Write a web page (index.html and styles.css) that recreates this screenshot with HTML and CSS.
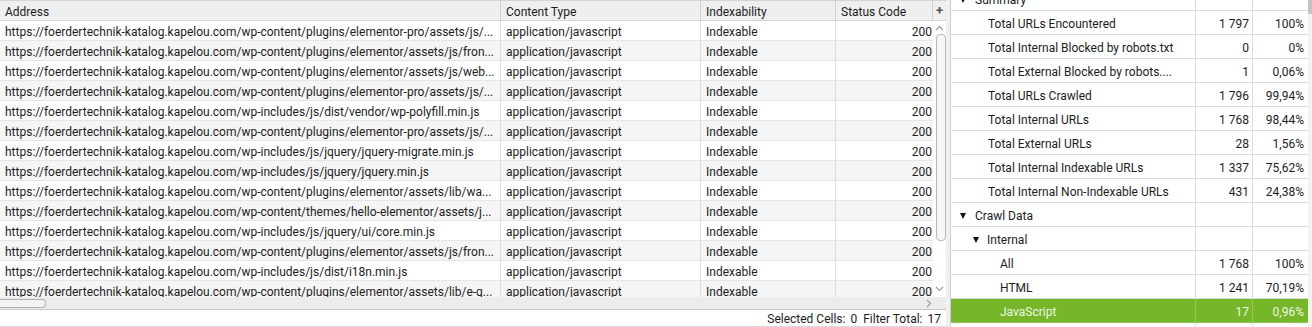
FILE: index.html
```html
<!DOCTYPE html>
<html lang="en">
<head>
  <meta charset="UTF-8">
  <title>Crawl results</title>
  <link rel="stylesheet" href="styles.css">
</head>
<body>
  <div class="app">
    <section class="results">
      <div class="grid-head">
        <div class="hc c-addr">Address</div>
        <div class="hc c-type">Content Type</div>
        <div class="hc c-idx">Indexability</div>
        <div class="hc c-code">Status Code</div>
        <div class="hc c-plus">+</div>
      </div>

      <div class="grid-body">
        <div class="rows">
          <div class="row"><div class="c c-addr">https://foerdertechnik-katalog.kapelou.com/wp-content/plugins/elementor-pro/assets/js/...</div><div class="c c-type">application/javascript</div><div class="c c-idx">Indexable</div><div class="c c-code">200</div></div>
          <div class="row"><div class="c c-addr">https://foerdertechnik-katalog.kapelou.com/wp-content/plugins/elementor/assets/js/fron...</div><div class="c c-type">application/javascript</div><div class="c c-idx">Indexable</div><div class="c c-code">200</div></div>
          <div class="row"><div class="c c-addr">https://foerdertechnik-katalog.kapelou.com/wp-content/plugins/elementor/assets/js/web...</div><div class="c c-type">application/javascript</div><div class="c c-idx">Indexable</div><div class="c c-code">200</div></div>
          <div class="row"><div class="c c-addr">https://foerdertechnik-katalog.kapelou.com/wp-content/plugins/elementor-pro/assets/js/...</div><div class="c c-type">application/javascript</div><div class="c c-idx">Indexable</div><div class="c c-code">200</div></div>
          <div class="row"><div class="c c-addr">https://foerdertechnik-katalog.kapelou.com/wp-includes/js/dist/vendor/wp-polyfill.min.js</div><div class="c c-type">application/javascript</div><div class="c c-idx">Indexable</div><div class="c c-code">200</div></div>
          <div class="row"><div class="c c-addr">https://foerdertechnik-katalog.kapelou.com/wp-content/plugins/elementor-pro/assets/js/...</div><div class="c c-type">application/javascript</div><div class="c c-idx">Indexable</div><div class="c c-code">200</div></div>
          <div class="row"><div class="c c-addr">https://foerdertechnik-katalog.kapelou.com/wp-includes/js/jquery/jquery-migrate.min.js</div><div class="c c-type">application/javascript</div><div class="c c-idx">Indexable</div><div class="c c-code">200</div></div>
          <div class="row"><div class="c c-addr">https://foerdertechnik-katalog.kapelou.com/wp-includes/js/jquery/jquery.min.js</div><div class="c c-type">application/javascript</div><div class="c c-idx">Indexable</div><div class="c c-code">200</div></div>
          <div class="row"><div class="c c-addr">https://foerdertechnik-katalog.kapelou.com/wp-content/plugins/elementor/assets/lib/wa...</div><div class="c c-type">application/javascript</div><div class="c c-idx">Indexable</div><div class="c c-code">200</div></div>
          <div class="row"><div class="c c-addr">https://foerdertechnik-katalog.kapelou.com/wp-content/themes/hello-elementor/assets/j...</div><div class="c c-type">application/javascript</div><div class="c c-idx">Indexable</div><div class="c c-code">200</div></div>
          <div class="row"><div class="c c-addr">https://foerdertechnik-katalog.kapelou.com/wp-includes/js/jquery/ui/core.min.js</div><div class="c c-type">application/javascript</div><div class="c c-idx">Indexable</div><div class="c c-code">200</div></div>
          <div class="row"><div class="c c-addr">https://foerdertechnik-katalog.kapelou.com/wp-content/plugins/elementor/assets/js/fron...</div><div class="c c-type">application/javascript</div><div class="c c-idx">Indexable</div><div class="c c-code">200</div></div>
          <div class="row"><div class="c c-addr">https://foerdertechnik-katalog.kapelou.com/wp-includes/js/dist/i18n.min.js</div><div class="c c-type">application/javascript</div><div class="c c-idx">Indexable</div><div class="c c-code">200</div></div>
          <div class="row"><div class="c c-addr">https://foerdertechnik-katalog.kapelou.com/wp-content/plugins/elementor/assets/lib/e-g...</div><div class="c c-type">application/javascript</div><div class="c c-idx">Indexable</div><div class="c c-code">200</div></div>
        </div>
        <div class="vscroll">
          <svg class="chev" width="9" height="6" viewBox="0 0 9 6"><polyline points="1,5 4.5,1.5 8,5" /></svg>
          <div class="vthumb"></div>
          <svg class="chev" width="9" height="6" viewBox="0 0 9 6"><polyline points="1,1 4.5,4.5 8,1" /></svg>
        </div>
      </div>

      <div class="hscroll">
        <div class="hthumb"></div>
        <svg class="chev chev-right" width="6" height="9" viewBox="0 0 6 9"><polyline points="1,1 4.5,4.5 1,8" /></svg>
      </div>

      <div class="status">
        <span>Selected Cells:</span><span class="num">0</span>
        <span class="gap">Filter Total:</span><span class="num">17</span>
      </div>
    </section>

    <div class="splitter"></div>

    <section class="overview">
      <div class="tree">
        <div class="trow first"><div class="lbl lvl0"><i class="tri"></i>Summary</div><div class="val"></div><div class="pct"></div></div>
        <div class="trow"><div class="lbl lvl1">Total URLs Encountered</div><div class="val">1 797</div><div class="pct">100%</div></div>
        <div class="trow"><div class="lbl lvl1">Total Internal Blocked by robots.txt</div><div class="val">0</div><div class="pct">0%</div></div>
        <div class="trow"><div class="lbl lvl1">Total External Blocked by robots....</div><div class="val">1</div><div class="pct">0,06%</div></div>
        <div class="trow"><div class="lbl lvl1">Total URLs Crawled</div><div class="val">1 796</div><div class="pct">99,94%</div></div>
        <div class="trow"><div class="lbl lvl1">Total Internal URLs</div><div class="val">1 768</div><div class="pct">98,44%</div></div>
        <div class="trow"><div class="lbl lvl1">Total External URLs</div><div class="val">28</div><div class="pct">1,56%</div></div>
        <div class="trow"><div class="lbl lvl1">Total Internal Indexable URLs</div><div class="val">1 337</div><div class="pct">75,62%</div></div>
        <div class="trow"><div class="lbl lvl1">Total Internal Non-Indexable URLs</div><div class="val">431</div><div class="pct">24,38%</div></div>
        <div class="trow"><div class="lbl lvl0"><i class="tri"></i>Crawl Data</div><div class="val"></div><div class="pct"></div></div>
        <div class="trow"><div class="lbl lvl1 node"><i class="tri"></i>Internal</div><div class="val"></div><div class="pct"></div></div>
        <div class="trow"><div class="lbl lvl2">All</div><div class="val">1 768</div><div class="pct">100%</div></div>
        <div class="trow"><div class="lbl lvl2">HTML</div><div class="val">1 241</div><div class="pct">70,19%</div></div>
        <div class="trow selected"><div class="lbl lvl2">JavaScript</div><div class="val">17</div><div class="pct">0,96%</div></div>
        <div class="trow"><div class="lbl lvl2"></div><div class="val"></div><div class="pct"></div></div>
      </div>
      <div class="oscroll"><div class="othumb"></div></div>
    </section>
  </div>
</body>
</html>
```

FILE: styles.css
```css
:root {
  --grid-line: #dedede;
  --text: #1c1c1c;
  --green: #76b72a;
}

body {
  margin: 0;
  font-family: Roboto, "Liberation Sans", Arial, sans-serif;
  font-size: 12px;
  color: var(--text);
  background: #fff;
}

.app {
  display: flex;
  width: 1312px;
  height: 327px;
  overflow: hidden;
}

/* left results grid */

.results {
  width: 946px;
  display: flex;
  flex-direction: column;
  flex-shrink: 0;
}

.grid-head {
  display: flex;
  height: 19px;
  background: #efefef;
  border-top: 1px solid #d4d4d4;
  border-bottom: 1px solid #d4d4d4;
}

.hc {
  line-height: 23px;
  padding-left: 5px;
  box-sizing: border-box;
  border-right: 1px solid #d0d0d0;
  white-space: nowrap;
  overflow: hidden;
}

.c-addr { width: 501px; }
.c-type { width: 200px; }
.c-idx { width: 135px; }
.c-code { width: 97px; }

.hc.c-plus {
  width: 13px;
  padding: 0;
  border-right: none;
  text-align: center;
  font-weight: bold;
  font-size: 13px;
  line-height: 19px;
  color: #555;
}

.grid-body {
  display: flex;
  height: 276px;
  overflow: hidden;
}

.rows {
  width: 933px;
  flex-shrink: 0;
}

.row {
  display: flex;
  height: 19px;
  border-bottom: 1px solid #e6e6e6;
}

.row:nth-child(even) {
  background: #f5f5f5;
}

.c {
  line-height: 23px;
  padding-left: 5px;
  box-sizing: border-box;
  border-right: 1px solid var(--grid-line);
  white-space: nowrap;
  overflow: hidden;
  text-overflow: ellipsis;
}

.c.c-code {
  text-align: right;
  padding-right: 1px;
  border-right: none;
}

.vscroll {
  width: 13px;
  display: flex;
  flex-direction: column;
  align-items: center;
  padding-top: 4px;
  box-sizing: border-box;
  background: #fff;
}

.vthumb {
  width: 8px;
  height: 205px;
  margin: 3px 0 0 2px;
  border: 1px solid #b8b8b8;
  border-radius: 4px;
  background: #f7f7f7;
}

.chev {
  fill: none;
  stroke: #999;
  stroke-width: 1.1;
}

.vscroll .chev:last-child {
  margin-top: auto;
  margin-bottom: 5px;
}

.hscroll {
  height: 12px;
  display: flex;
  align-items: center;
  background: #ececec;
  border-bottom: 1px solid #c8c8c8;
}

.hthumb {
  width: 45px;
  height: 7px;
  border: 1px solid #b0b0b0;
  border-left: none;
  border-radius: 0 4px 4px 0;
  background: #f3f3f3;
}

.chev-right {
  margin-left: auto;
  margin-right: 14px;
}

.status {
  height: 16px;
  line-height: 18px;
  display: flex;
  justify-content: flex-end;
  padding-right: 5px;
  border-bottom: 1px solid #dadada;
}

.status .num {
  margin-left: 5px;
}

.status .gap {
  margin-left: 6px;
}

/* splitter */

.splitter {
  width: 4px;
  background: #f0f0f0;
  flex-shrink: 0;
}

/* right overview tree */

.overview {
  flex: 1;
  display: flex;
  border-left: 1px solid #cfcfcf;
  background: #fff;
}

.tree {
  width: 357px;
}

.trow {
  display: flex;
  height: 23px;
  border-bottom: 1px solid #dcdcdc;
}

.trow.first {
  margin-top: -13px;
}

.trow > div {
  line-height: 27px;
  white-space: nowrap;
  overflow: hidden;
  box-sizing: border-box;
}

.lbl {
  width: 245px;
  border-right: 1px solid #dcdcdc;
}

.val {
  width: 57px;
  text-align: right;
  padding-right: 3px;
  border-right: 1px solid #dcdcdc;
}

.pct {
  width: 55px;
  text-align: right;
  padding-right: 4px;
}

.lvl0 { padding-left: 9px; }
.lvl1 { padding-left: 37px; }
.lvl1.node { padding-left: 22px; }
.lvl2 { padding-left: 49px; }

.tri {
  display: inline-block;
  width: 0;
  height: 0;
  border-left: 3.5px solid transparent;
  border-right: 3.5px solid transparent;
  border-top: 6px solid #111;
  margin-right: 9px;
  vertical-align: 1px;
}

.lvl1.node .tri {
  margin-right: 8px;
}

.trow.selected {
  background: var(--green);
  color: #eef6e2;
  border-bottom-color: #8cc34c;
}

.trow.selected .lbl,
.trow.selected .val {
  border-right-color: #93c75a;
}

.oscroll {
  width: 4px;
  margin-left: auto;
  background: #f2f2f2;
}

.othumb {
  height: 14px;
  background: #c4c4c4;
}
```
